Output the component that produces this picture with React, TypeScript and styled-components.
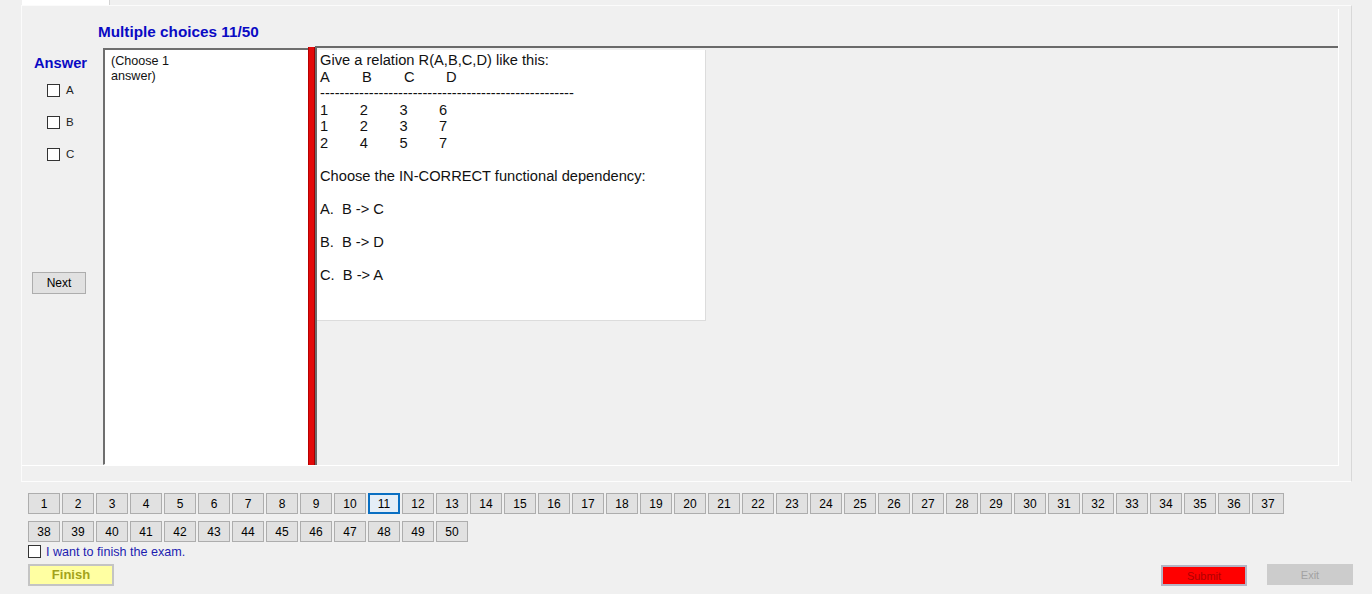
import React from "react";
import styled, { createGlobalStyle } from "styled-components";

const Global = createGlobalStyle`
  html, body { margin: 0; padding: 0; background: #f0f0f0; }
  body { font-family: "Liberation Sans", Arial, sans-serif; color: #000; }
  * { box-sizing: border-box; }
`;

const Page = styled.div`
  width: 1372px;
  height: 594px;
  overflow: hidden;
  background: #f0f0f0;
`;

const TabStrip = styled.div`
  height: 5px;
  padding-left: 22px;
`;

const Tab = styled.div`
  width: 88px;
  height: 5px;
  background: #ffffff;
  border-right: 1px solid #d4d4d4;
`;

const TabPage = styled.div`
  margin-left: 21px;
  width: 1331px;
  height: 477px;
  border: 1px solid #fbfbfb;
  border-right-color: #d8d8d8;
  border-bottom-color: #fdfdfd;
  padding-top: 3px;
`;

const InnerPanel = styled.div`
  width: 1317px;
  height: 457px;
  border-right: 1px solid #ffffff;
  border-bottom: 1px solid #ffffff;
  display: flex;
  flex-direction: column;
`;

const Title = styled.div`
  height: 37px;
  padding: 14px 0 0 76px;
  font-size: 15.3px;
  line-height: 18px;
  font-weight: bold;
  color: #0a0ac4;
`;

const MainRow = styled.div`
  flex: 1;
  display: flex;
  min-height: 0;
`;

const LeftCol = styled.div`
  width: 81px;
  display: flex;
  flex-direction: column;
`;

const AnswerLabel = styled.div`
  margin: 8px 0 0 12px;
  font-size: 14.7px;
  line-height: 18px;
  font-weight: bold;
  color: #0a0ac4;
`;

const OptionRow = styled.label`
  height: 32px;
  display: flex;
  align-items: center;
  gap: 6px;
  padding-left: 25px;
  font-size: 11.5px;
  color: #222;
  &:first-of-type { margin-top: 2px; }
`;

const Box = styled.span`
  width: 13px;
  height: 13px;
  border: 1px solid #333333;
  background: #ffffff;
  flex: none;
`;

const WinButton = styled.button`
  font-family: "Liberation Sans", Arial, sans-serif;
  font-size: 12px;
  color: #000;
  background: #e1e1e1;
  border: 1px solid #adadad;
  padding: 0;
  display: flex;
  align-items: center;
  justify-content: center;
`;

const NextButton = styled(WinButton)`
  margin: 102px 0 0 10px;
  width: 54px;
  height: 22px;
`;

const ChoiceBox = styled.div`
  width: 205px;
  margin-top: 2px;
  background: #ffffff;
  border-top: 2px solid #6e6e6e;
  border-left: 2px solid #6e6e6e;
  border-bottom: 1px solid #ffffff;
  padding: 4px 0 0 6px;
  font-size: 12.6px;
  line-height: 15px;
  color: #111;
`;

const RedBar = styled.div`
  width: 7px;
  margin-top: 1px;
  background: #e20a0a;
  border-left: 1px solid #b80000;
  border-right: 1px solid #a00000;
`;

const QuestionArea = styled.div`
  flex: 1;
  border-top: 2px solid #6a6a6a;
  border-left: 2px solid #6a6a6a;
  padding-top: 2px;
`;

const QuestionBox = styled.div`
  width: 389px;
  height: 271px;
  background: #ffffff;
  border-right: 1px solid #dcdcdc;
  border-bottom: 1px solid #dcdcdc;
  padding: 2px 0 0 3px;
  font-size: 14.67px;
  line-height: 16.5px;
  color: #111;
`;

const QLine = styled.div`
  height: 16.5px;
  white-space: pre;
  display: flex;
`;

const Cell = styled.span<{ $w: number }>`
  width: ${(p) => p.$w}px;
  flex: none;
`;

const Bottom = styled.div`
  padding: 11px 19px 0 28px;
`;

const NavGrid = styled.div`
  width: 1260px;
  display: flex;
  flex-wrap: wrap;
  column-gap: 2px;
  row-gap: 7px;
`;

const NavButton = styled(WinButton)<{ $current?: boolean }>`
  width: 32px;
  height: 21px;
  border: ${(p) => (p.$current ? "2px solid #0a6fc2" : "1px solid #adadad")};
  background: ${(p) => (p.$current ? "#e5eef7" : "#e1e1e1")};
`;

const FinishCheck = styled.label`
  margin-top: 3px;
  height: 13px;
  display: flex;
  align-items: center;
  gap: 5px;
  font-size: 12.6px;
  color: #1c1cb0;
`;

const ActionRow = styled.div`
  margin-top: 5px;
  display: flex;
  align-items: center;
`;

const FinishButton = styled.button`
  width: 86px;
  height: 22px;
  background: #ffffa2;
  border: 2px solid #c4c4c4;
  font-family: "Liberation Sans", Arial, sans-serif;
  font-weight: bold;
  font-size: 13px;
  color: #a3a31a;
  padding: 0;
`;

const Spacer = styled.div`
  flex: 1;
`;

const SubmitButton = styled.button`
  width: 86px;
  height: 21px;
  margin-top: 2px;
  background: #ff0000;
  border: 2px solid #b4b4c4;
  font-family: "Liberation Sans", Arial, sans-serif;
  font-size: 11px;
  color: #b00000;
  padding: 0;
`;

const ExitButton = styled.button`
  width: 86px;
  height: 21px;
  margin-left: 20px;
  background: #cccccc;
  border: none;
  font-family: "Liberation Sans", Arial, sans-serif;
  font-size: 11px;
  color: #a2a2a2;
  padding: 0;
`;

const letters = ["A", "B", "C", "D"];
const rows = [
  ["1", "2", "3", "6"],
  ["1", "2", "3", "7"],
  ["2", "4", "5", "7"],
];

export default function App() {
  const nums = Array.from({ length: 50 }, (_, i) => i + 1);
  return (
    <Page>
      <Global />
      <TabStrip>
        <Tab />
      </TabStrip>
      <TabPage>
        <InnerPanel>
          <Title>Multiple choices 11/50</Title>
          <MainRow>
            <LeftCol>
              <AnswerLabel>Answer</AnswerLabel>
              {["A", "B", "C"].map((o) => (
                <OptionRow key={o}>
                  <Box />
                  {o}
                </OptionRow>
              ))}
              <NextButton>Next</NextButton>
            </LeftCol>
            <ChoiceBox>
              (Choose 1
              <br />
              answer)
            </ChoiceBox>
            <RedBar />
            <QuestionArea>
              <QuestionBox>
                <QLine>Give a relation R(A,B,C,D) like this:</QLine>
                <QLine>
                  {letters.map((l) => (
                    <Cell key={l} $w={42}>
                      {l}
                    </Cell>
                  ))}
                </QLine>
                <QLine>{"-".repeat(52)}</QLine>
                {rows.map((r, i) => (
                  <QLine key={i}>
                    {r.map((v, j) => (
                      <Cell key={j} $w={39.7}>
                        {v}
                      </Cell>
                    ))}
                  </QLine>
                ))}
                <QLine> </QLine>
                <QLine>Choose the IN-CORRECT functional dependency:</QLine>
                <QLine> </QLine>
                <QLine>{"A.  B -> C"}</QLine>
                <QLine> </QLine>
                <QLine>{"B.  B -> D"}</QLine>
                <QLine> </QLine>
                <QLine>{"C.  B -> A"}</QLine>
              </QuestionBox>
            </QuestionArea>
          </MainRow>
        </InnerPanel>
      </TabPage>
      <Bottom>
        <NavGrid>
          {nums.map((n) => (
            <NavButton key={n} $current={n === 11}>
              {n}
            </NavButton>
          ))}
        </NavGrid>
        <FinishCheck>
          <Box />I want to finish the exam.
        </FinishCheck>
        <ActionRow>
          <FinishButton>Finish</FinishButton>
          <Spacer />
          <SubmitButton>Submit</SubmitButton>
          <ExitButton>Exit</ExitButton>
        </ActionRow>
      </Bottom>
    </Page>
  );
}
